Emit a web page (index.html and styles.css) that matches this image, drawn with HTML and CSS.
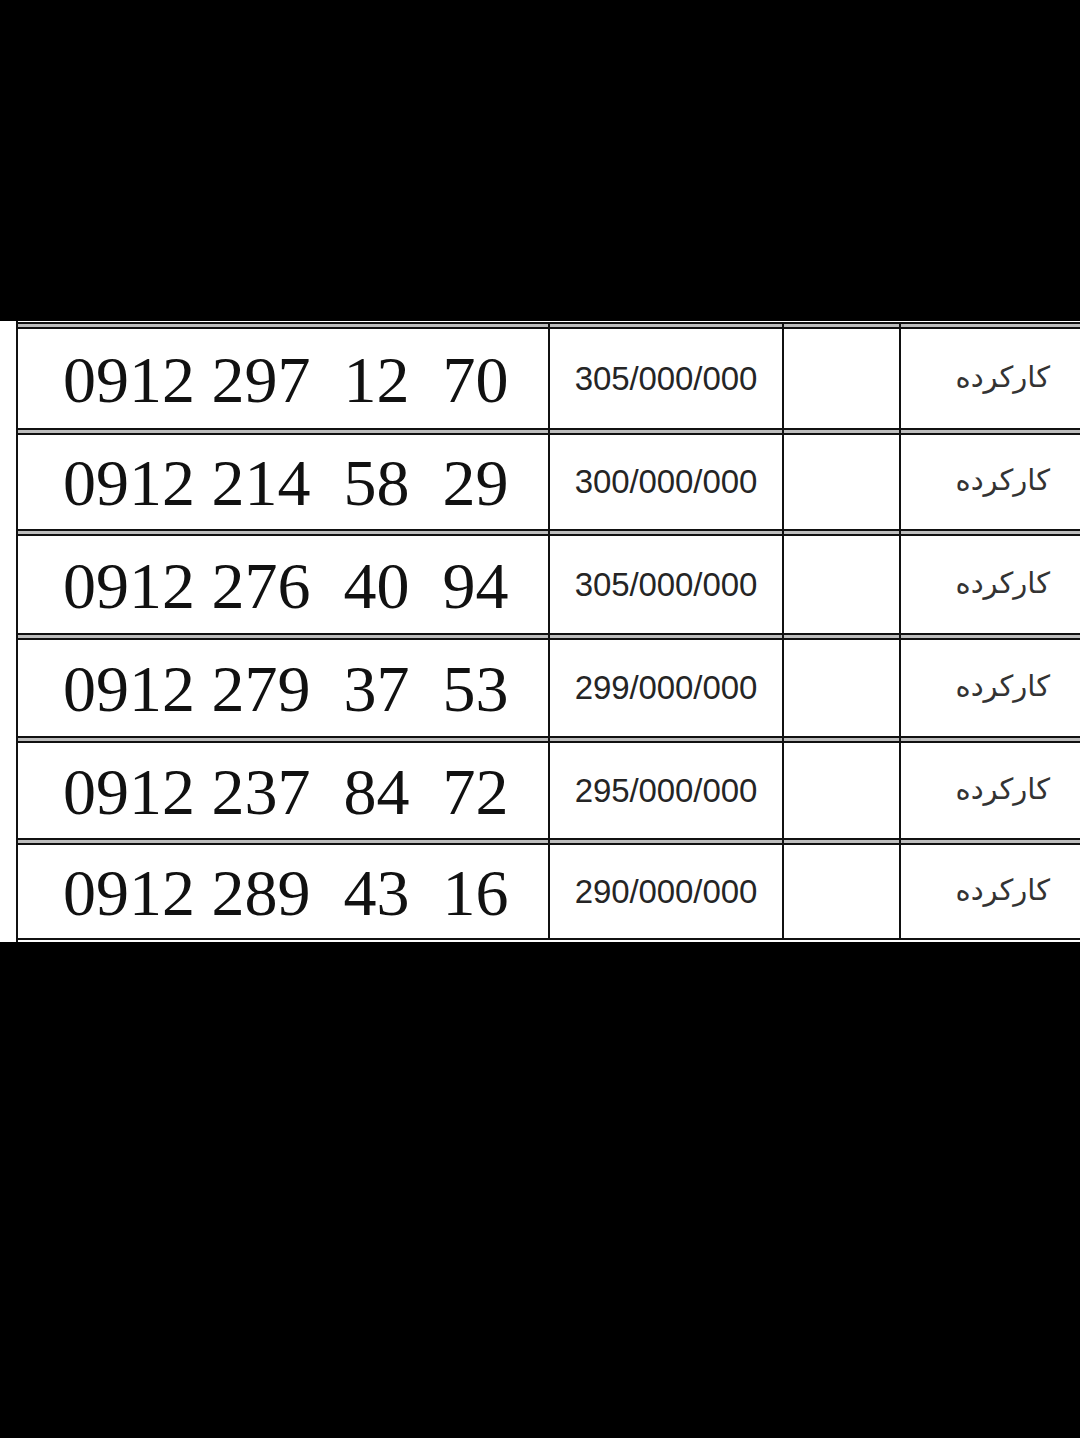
FILE: index.html
```html
<!DOCTYPE html>
<html lang="fa">
<head>
<meta charset="utf-8">
<title>SIM numbers</title>
<link rel="stylesheet" href="styles.css">
</head>
<body>
<div class="sheet">
  <div class="strip"></div>
  <div class="table">
    <div class="sep"><i class="c1"></i><i class="c2"></i><i class="c3"></i><i class="c4"></i></div>
    <div class="row r1"><div class="cell c1 num">0912 297  12  70</div><div class="cell c2 price">305/000/000</div><div class="cell c3"></div><div class="cell c4 status">کارکرده</div></div>
    <div class="sep"><i class="c1"></i><i class="c2"></i><i class="c3"></i><i class="c4"></i></div>
    <div class="row r2"><div class="cell c1 num">0912 214  58  29</div><div class="cell c2 price">300/000/000</div><div class="cell c3"></div><div class="cell c4 status">کارکرده</div></div>
    <div class="sep"><i class="c1"></i><i class="c2"></i><i class="c3"></i><i class="c4"></i></div>
    <div class="row r3"><div class="cell c1 num">0912 276  40  94</div><div class="cell c2 price">305/000/000</div><div class="cell c3"></div><div class="cell c4 status">کارکرده</div></div>
    <div class="sep"><i class="c1"></i><i class="c2"></i><i class="c3"></i><i class="c4"></i></div>
    <div class="row r4"><div class="cell c1 num">0912 279  37  53</div><div class="cell c2 price">299/000/000</div><div class="cell c3"></div><div class="cell c4 status">کارکرده</div></div>
    <div class="sep"><i class="c1"></i><i class="c2"></i><i class="c3"></i><i class="c4"></i></div>
    <div class="row r5"><div class="cell c1 num">0912 237  84  72</div><div class="cell c2 price">295/000/000</div><div class="cell c3"></div><div class="cell c4 status">کارکرده</div></div>
    <div class="sep"><i class="c1"></i><i class="c2"></i><i class="c3"></i><i class="c4"></i></div>
    <div class="row r6 last"><div class="cell c1 num">0912 289  43  16</div><div class="cell c2 price">290/000/000</div><div class="cell c3"></div><div class="cell c4 status">کارکرده</div></div>
  </div>
</div>
</body>
</html>
```

FILE: styles.css
```css
html, body {
  margin: 0;
  padding: 0;
  background: #000;
}
body {
  width: 1080px;
  height: 1438px;
  overflow: hidden;
}
.sheet {
  margin-top: 321px;
  height: 621px;
  background: #fff;
  display: flex;
}
.strip {
  width: 16px;
  flex: none;
  background: #fff;
}
.table {
  flex: 1;
  border-left: 2px solid #111;
  padding-top: 1px;
  padding-bottom: 2px;
  display: flex;
  flex-direction: column;
}
.sep {
  display: flex;
  height: 7px;
  flex: none;
}
.sep i {
  display: block;
  height: 7px;
  box-sizing: border-box;
  border-top: 2px solid #111;
  border-bottom: 2px solid #111;
  background: #bdbdbd;
  border-right: 2px solid #111;
}
.row {
  display: flex;
  flex: none;
}
.r1 { height: 99px; }
.r2 { height: 94px; }
.r3 { height: 97px; }
.r4 { height: 96px; }
.r5 { height: 95px; }
.r6 { height: 93px; }
.row.last {
  border-bottom: 2px solid #111;
}
.cell {
  box-sizing: border-box;
  border-right: 2px solid #111;
  display: flex;
  align-items: center;
  height: 100%;
}
.c1 { width: 532px; flex: none; }
.c2 { width: 234px; flex: none; }
.c3 { width: 117px; flex: none; }
.c4 { flex: 1; border-right: none; }
.sep .c4 { border-right: none; }
.num {
  font-family: "Liberation Serif", "Times New Roman", serif;
  font-size: 66px;
  color: #111;
  white-space: pre;
  padding-left: 45px;
  padding-top: 2px;
}
.price {
  font-family: "Liberation Sans", Arial, sans-serif;
  font-size: 33px;
  color: #252525;
  justify-content: center;
  letter-spacing: -0.1px;
}
.status {
  font-family: "DejaVu Sans", sans-serif;
  font-size: 29px;
  color: #333;
  direction: rtl;
  justify-content: flex-start;
  padding-right: 30px;
  padding-bottom: 4px;
}
```
